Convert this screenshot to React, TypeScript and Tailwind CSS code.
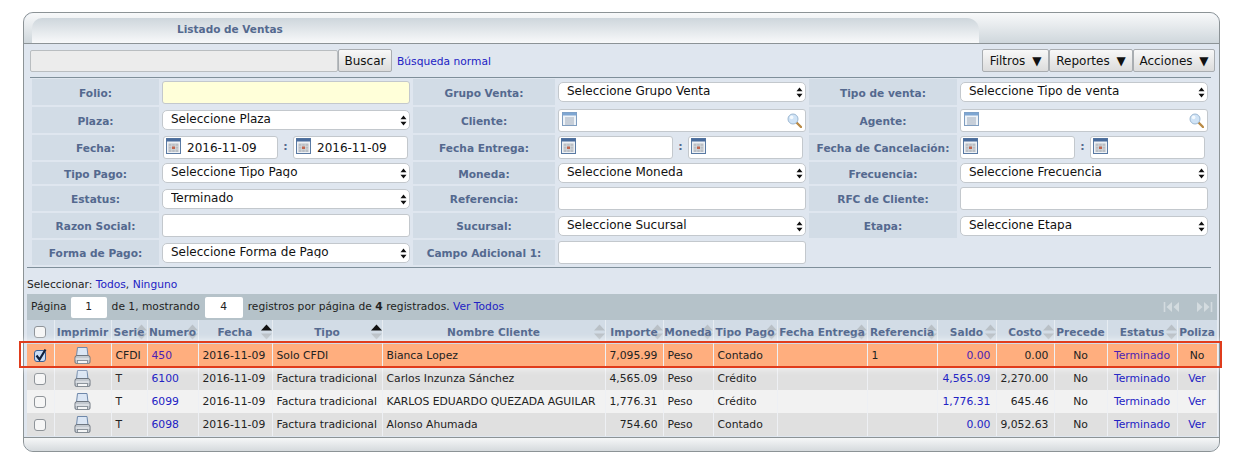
import type { ReactNode } from "react";

const fontStack = "font-['DejaVu_Sans',sans-serif]";

function CalendarIcon() {
  return (
    <svg viewBox="0 0 15 16" className="absolute left-[3px] top-[2px] h-4 w-[15px]">
      <rect x="0.5" y="0.5" width="14" height="15" fill="#eef1f5" stroke="#5a7aa3" />
      <rect x="0.5" y="0.5" width="14" height="3" fill="#4a6c9c" />
      <rect x="2.5" y="5.5" width="10" height="8.5" fill="#b9bec4" />
      <path d="M2.5 8.3h10M2.5 11.1h10M5.8 5.5v8.5M9.2 5.5v8.5" stroke="#dfe2e6" strokeWidth="0.6" />
      <rect x="6" y="8.5" width="3" height="2.5" fill="#c0654f" />
    </svg>
  );
}

function ListIcon() {
  return (
    <svg viewBox="0 0 15 14" className="absolute left-[4px] top-[3px] h-[14px] w-[15px]">
      <rect x="0.5" y="0.5" width="14" height="13" fill="#eef3f8" stroke="#7f9dbf" />
      <rect x="0.5" y="0.5" width="14" height="3" fill="#7ea6d2" />
      <path d="M3 6h9M3 8h9M3 10h9M3 12h9" stroke="#8a98a8" strokeWidth="0.8" />
    </svg>
  );
}

function SearchIcon() {
  return (
    <svg viewBox="0 0 15 15" className="absolute right-[4px] top-[4px] h-[15px] w-[15px]">
      <path d="M9 9l5 5" stroke="#b98a45" strokeWidth="2.4" strokeLinecap="round" />
      <circle cx="6" cy="6" r="5" fill="#cfe3f6" stroke="#9db8d2" />
      <circle cx="4.6" cy="4.4" r="1.8" fill="#f4f9fd" />
    </svg>
  );
}

function Select({ label }: { label: string }) {
  return (
    <div className="relative h-5 w-full">
      <select
        defaultValue={label}
        className={`block h-5 w-full appearance-none rounded-[5px] border border-[#c3c8cd] bg-white pb-[2px] pl-2 text-xs leading-none text-[#111] ${fontStack}`}
      >
        <option>{label}</option>
      </select>
      <svg viewBox="0 0 7 11" className="pointer-events-none absolute right-[3px] top-[5px] h-[11px] w-[7px]">
        <path d="M3.5 0.5L6.5 4.3H0.5zM3.5 10.5L6.5 6.7H0.5z" fill="#111" />
      </svg>
    </div>
  );
}

function TextInput({ bg = "bg-white" }: { bg?: string }) {
  return <input readOnly className={`block h-[23px] w-full rounded-[3px] border border-[#c3c8cd] ${bg}`} />;
}

function LookupInput() {
  return (
    <div className="relative h-[23px] w-full">
      <TextInput />
      <ListIcon />
      <SearchIcon />
    </div>
  );
}

function DateBox({ value = "" }: { value?: string }) {
  return (
    <div className="relative h-[23px] w-[115px]">
      <input
        readOnly
        value={value}
        className={`block h-[23px] w-full rounded-[3px] border border-[#c3c8cd] bg-white pl-[23px] text-xs text-[#111] ${fontStack}`}
      />
      <CalendarIcon />
    </div>
  );
}

function DateRange({ value, inset = "pr-[3px]" }: { value?: string; inset?: string }) {
  return (
    <div className={`flex w-full items-center justify-between ${inset}`}>
      <DateBox value={value} />
      <span className="text-[11px] font-bold text-[#54698f]">:</span>
      <DateBox value={value} />
    </div>
  );
}

function Label({ children }: { children: string }) {
  return (
    <div className="flex items-center justify-center bg-[#d2dce6] pt-[3px] text-[10.6px] font-bold whitespace-nowrap text-[#54698f]">
      {children}
    </div>
  );
}

function Cell({ children }: { children: ReactNode }) {
  return <div className="flex items-center">{children}</div>;
}

function SortIcon({ active }: { active?: boolean }) {
  return (
    <svg viewBox="0 0 11 16" className="absolute right-0 top-[4px] h-4 w-[11px]">
      <path d="M5.5 0.5L11 6.5H0z" fill={active ? "#111" : "#b9c0c6"} />
      <path d="M5.5 15.5L11 9.5H0z" fill="#b9c0c6" />
    </svg>
  );
}

function Check({ checked }: { checked?: boolean }) {
  return (
    <span
      className={`relative mx-auto block size-[12px] rounded-[3px] border ${
        checked ? "border-[#3b5f94] bg-[#c9dcf5]" : "border-[#8f9499] bg-[#f6f6f6]"
      }`}
    >
      {checked && (
        <svg viewBox="0 0 14 14" className="absolute -left-[1px] -top-[3px] size-[14px]">
          <path d="M2.5 7.5l3 4 6-10" fill="none" stroke="#10203c" strokeWidth="2.2" />
        </svg>
      )}
    </span>
  );
}

function Printer() {
  return (
    <svg viewBox="0 0 17 18" className="mx-auto block h-[18px] w-[17px]">
      <path d="M3.5 0.5h9.5l1 8.5H2.5z" fill="#dbe6f4" stroke="#6f88aa" />
      <path d="M1 10.5Q1 8.5 3 8.5h11q2 0 2 2V15Q16 16.5 14.5 16.5h-12Q1 16.5 1 15z" fill="#c3c9d0" stroke="#6e7680" />
      <path d="M1.5 12h14" stroke="#e8ebef" strokeWidth="1.2" />
      <rect x="3.5" y="13.5" width="10" height="3" fill="#f4f5f6" stroke="#7b838c" strokeWidth="0.8" />
    </svg>
  );
}

function PagerIcons() {
  return (
    <div className="ml-auto flex items-center gap-[16px] pr-[4px]">
      <svg viewBox="0 0 17 12" className="h-3 w-[17px]">
        <path d="M1.5 1v10" stroke="#d3dbdf" strokeWidth="1.6" />
        <path d="M9 1v10L3.5 6zM16 1v10L10.5 6z" fill="#d3dbdf" />
      </svg>
      <svg viewBox="0 0 17 12" className="h-3 w-[17px]">
        <path d="M15.5 1v10" stroke="#d3dbdf" strokeWidth="1.6" />
        <path d="M1 1v10L6.5 6zM8 1v10L13.5 6z" fill="#d3dbdf" />
      </svg>
    </div>
  );
}

const columns = [
  { title: "", width: 27 },
  { title: "Imprimir", width: 57 },
  { title: "Serie", width: 36, sort: true },
  { title: "Numero", width: 51, sort: true },
  { title: "Fecha", width: 74, sort: true, active: true },
  { title: "Tipo", width: 110, sort: true, active: true },
  { title: "Nombre Cliente", width: 223, sort: true },
  { title: "Importe", width: 58, sort: true },
  { title: "Moneda", width: 50, sort: true },
  { title: "Tipo Pago", width: 64, sort: true },
  { title: "Fecha Entrega", width: 90, sort: true },
  { title: "Referencia", width: 70, sort: true },
  { title: "Saldo", width: 59, sort: true },
  { title: "Costo", width: 58, sort: true },
  { title: "Precede", width: 53 },
  { title: "Estatus", width: 70, sort: true },
  { title: "Poliza", width: 40 },
];

const ventas = [
  { serie: "CFDI", numero: "450", tipo: "Solo CFDI", cliente: "Bianca Lopez", importe: "7,095.99", pago: "Contado", ref: "1", saldo: "0.00", costo: "0.00", poliza: "No", selected: true },
  { serie: "T", numero: "6100", tipo: "Factura tradicional", cliente: "Carlos Inzunza Sánchez", importe: "4,565.09", pago: "Crédito", ref: "", saldo: "4,565.09", costo: "2,270.00", poliza: "Ver" },
  { serie: "T", numero: "6099", tipo: "Factura tradicional", cliente: "KARLOS EDUARDO QUEZADA AGUILAR", importe: "1,776.31", pago: "Crédito", ref: "", saldo: "1,776.31", costo: "645.46", poliza: "Ver" },
  { serie: "T", numero: "6098", tipo: "Factura tradicional", cliente: "Alonso Ahumada", importe: "754.60", pago: "Contado", ref: "", saldo: "0.00", costo: "9,052.63", poliza: "Ver" },
];

const rowColors = ["bg-[#ffae7e]", "bg-[#e0e0e0]", "bg-[#f2f2f2]", "bg-[#e0e0e0]"];

export default function App() {
  return (
    <div className={`h-[463px] w-[1241px] overflow-hidden bg-white pl-[23px] pt-3 ${fontStack}`}>
      <div className="h-[440px] w-[1197px] rounded-[10px] border border-[#8c9396] bg-[#dfe6ef]">
        {/* Header con pestaña */}
        <div className="flex h-[31px] items-end rounded-t-[10px] border-b border-[#8c9396] bg-gradient-to-b from-[#f8f9fa] to-[#cfd7dc] pl-2">
          <div className="h-[25px] w-[947px] rounded-tr-[12px] rounded-tl-[10px] bg-gradient-to-b from-[#ced6dc] to-[#f8f9fa] pl-[145px] pt-[1px] text-[10.5px] font-bold leading-[20px] text-[#54698f]">
            Listado de Ventas
          </div>
        </div>

        <div className="h-[393px]">
          {/* Búsqueda */}
          <div className="flex h-[23px] translate-y-[5px] items-center pl-[6px]">
            <input readOnly className="h-[22px] w-[308px] rounded-[2px] border border-[#b9bdc0] bg-[#ececec]" />
            <button className="h-[23px] w-[54px] rounded-[2px] border border-[#a9adb1] bg-gradient-to-b from-[#f8f8f8] to-[#dcdcdc] text-xs text-[#111]">
              Buscar
            </button>
            <a className="ml-[5px] pt-[3px] text-[10.7px] text-[#2222c4]">Búsqueda normal</a>
            <div className="ml-auto flex pr-[4px]">
              {[
                ["Filtros", "w-[67px]"],
                ["Reportes", "w-[84px]"],
                ["Acciones", "w-[82px]"],
              ].map(([text, width]) => (
                <button
                  key={text}
                  className={`h-[23px] ${width} rounded-[2px] border border-[#a9adb1] bg-gradient-to-b from-[#f8f8f8] to-[#dcdcdc] text-xs whitespace-nowrap text-[#111]`}
                >
                  {text} <span className="ml-[3px]">▼</span>
                </button>
              ))}
            </div>
          </div>

          <div className="ml-[6px] mt-[10px] h-px w-[1181px] bg-[#7f8f9a]" />

          {/* Filtros */}
          <div className="ml-[8px] mt-[1px] grid grid-cols-[127px_248px_142px_248px_148px_248px] grid-rows-[26px_26px_25px_22px_25px_25px_25px] gap-x-[3px] gap-y-[2px]">
            <Label>Folio:</Label>
            <Cell><TextInput bg="bg-[#ffffd9]" /></Cell>
            <Label>Grupo Venta:</Label>
            <Cell><Select label="Seleccione Grupo Venta" /></Cell>
            <Label>Tipo de venta:</Label>
            <Cell><Select label="Seleccione Tipo de venta" /></Cell>

            <Label>Plaza:</Label>
            <Cell><Select label="Seleccione Plaza" /></Cell>
            <Label>Cliente:</Label>
            <Cell><LookupInput /></Cell>
            <Label>Agente:</Label>
            <Cell><LookupInput /></Cell>

            <Label>Fecha:</Label>
            <Cell><DateRange value="2016-11-09" inset="pl-[1px] pr-[2px]" /></Cell>
            <Label>Fecha Entrega:</Label>
            <Cell><DateRange /></Cell>
            <Label>Fecha de Cancelación:</Label>
            <Cell><DateRange /></Cell>

            <Label>Tipo Pago:</Label>
            <Cell><Select label="Seleccione Tipo Pago" /></Cell>
            <Label>Moneda:</Label>
            <Cell><Select label="Seleccione Moneda" /></Cell>
            <Label>Frecuencia:</Label>
            <Cell><Select label="Seleccione Frecuencia" /></Cell>

            <Label>Estatus:</Label>
            <Cell><Select label="Terminado" /></Cell>
            <Label>Referencia:</Label>
            <Cell><TextInput /></Cell>
            <Label>RFC de Cliente:</Label>
            <Cell><TextInput /></Cell>

            <Label>Razon Social:</Label>
            <Cell><TextInput /></Cell>
            <Label>Sucursal:</Label>
            <Cell><Select label="Seleccione Sucursal" /></Cell>
            <Label>Etapa:</Label>
            <Cell><Select label="Seleccione Etapa" /></Cell>

            <Label>Forma de Pago:</Label>
            <Cell><Select label="Seleccione Forma de Pago" /></Cell>
            <Label>Campo Adicional 1:</Label>
            <Cell><TextInput /></Cell>
          </div>

          <div className="ml-[3px] mt-[2px] h-px w-[1184px] bg-[#7f8f9a]" />

          <div className="ml-[3px] mt-[10px] h-[14px] text-[10.7px] leading-[14px] text-[#222]">
            Seleccionar: <a className="text-[#2222c4]">Todos</a>, <a className="text-[#2222c4]">Ninguno</a>
          </div>

          {/* Paginación */}
          <div className="ml-[3px] mt-[2px] flex h-[26px] w-[1190px] items-center bg-[#b5c2c9] pl-[4px] text-[10.7px] text-[#222]">
            <span>Página</span>
            <span className="ml-[4px] flex h-[21px] w-[36px] items-center justify-center rounded-[2px] bg-white">1</span>
            <span className="ml-[5px]">de 1, mostrando</span>
            <span className="ml-[5px] flex h-[21px] w-[38px] items-center justify-center rounded-[2px] bg-white">4</span>
            <span className="ml-[5px]">
              registros por página de <b>4</b> registrados. <a className="text-[#2222c4]">Ver Todos</a>
            </span>
            <PagerIcons />
          </div>

          {/* Tabla */}
          <div className="relative ml-[3px] w-[1190px]">
            <table className="w-[1190px] table-fixed border-collapse text-[10.8px] text-[#222]">
              <colgroup>
                {columns.map((c, i) => (
                  <col key={i} style={{ width: c.width }} />
                ))}
              </colgroup>
              <thead>
                <tr className="h-[24px] bg-[#d2dce6]">
                  {columns.map((c, i) => (
                    <th
                      key={i}
                      className="relative overflow-visible border-r border-[#e6ecf2] p-0 text-center text-[10.6px] font-bold whitespace-nowrap text-[#54698f]"
                    >
                      {c.sort && <SortIcon active={c.active} />}
                      {i === 0 ? <Check /> : <span className="relative block pt-[2px]">{c.title}</span>}
                    </th>
                  ))}
                </tr>
              </thead>
              <tbody>
                {ventas.map((v, i) => {
                  const link = v.selected ? "text-[#4b1fb4]" : "text-[#2222c4]";
                  const box = "border-r border-[#eef0f4] p-0 whitespace-nowrap";
                  const td = `${box} pt-[2px]`;
                  return (
                    <tr key={v.numero} className={`h-[23px] ${rowColors[i]}`}>
                      <td className={box}><Check checked={v.selected} /></td>
                      <td className={box}><Printer /></td>
                      <td className={`${td} pl-[4px]`}>{v.serie}</td>
                      <td className={`${td} pl-[4px] ${link}`}>{v.numero}</td>
                      <td className={`${td} pl-[4px]`}>2016-11-09</td>
                      <td className={`${td} pl-[4px]`}>{v.tipo}</td>
                      <td className={`${td} pl-[4px]`}>{v.cliente}</td>
                      <td className={`${td} pr-[5px] text-right`}>{v.importe}</td>
                      <td className={`${td} pl-[4px]`}>Peso</td>
                      <td className={`${td} pl-[4px]`}>{v.pago}</td>
                      <td className={td} />
                      <td className={`${td} pl-[4px]`}>{v.ref}</td>
                      <td className={`${td} pr-[5px] text-right ${link}`}>{v.saldo}</td>
                      <td className={`${td} pr-[5px] text-right`}>{v.costo}</td>
                      <td className={`${td} text-center`}>No</td>
                      <td className={`${td} text-center ${link}`}>Terminado</td>
                      <td className={`${td} text-center ${v.selected ? "" : link}`}>{v.poliza}</td>
                    </tr>
                  );
                })}
              </tbody>
            </table>
            {/* Recuadro rojo sobre la fila seleccionada */}
            <div className="pointer-events-none absolute -left-[8px] top-[21px] h-[27px] w-[1203px] border-2 border-[#e03c1c] shadow-[0_0_8px_rgba(255,255,255,0.8)]" />
          </div>
        </div>

        <div className="h-[14px] rounded-b-[10px] border-t border-[#8c9396] bg-gradient-to-b from-[#f6f7f8] to-[#d5dadd]" />
      </div>
    </div>
  );
}
